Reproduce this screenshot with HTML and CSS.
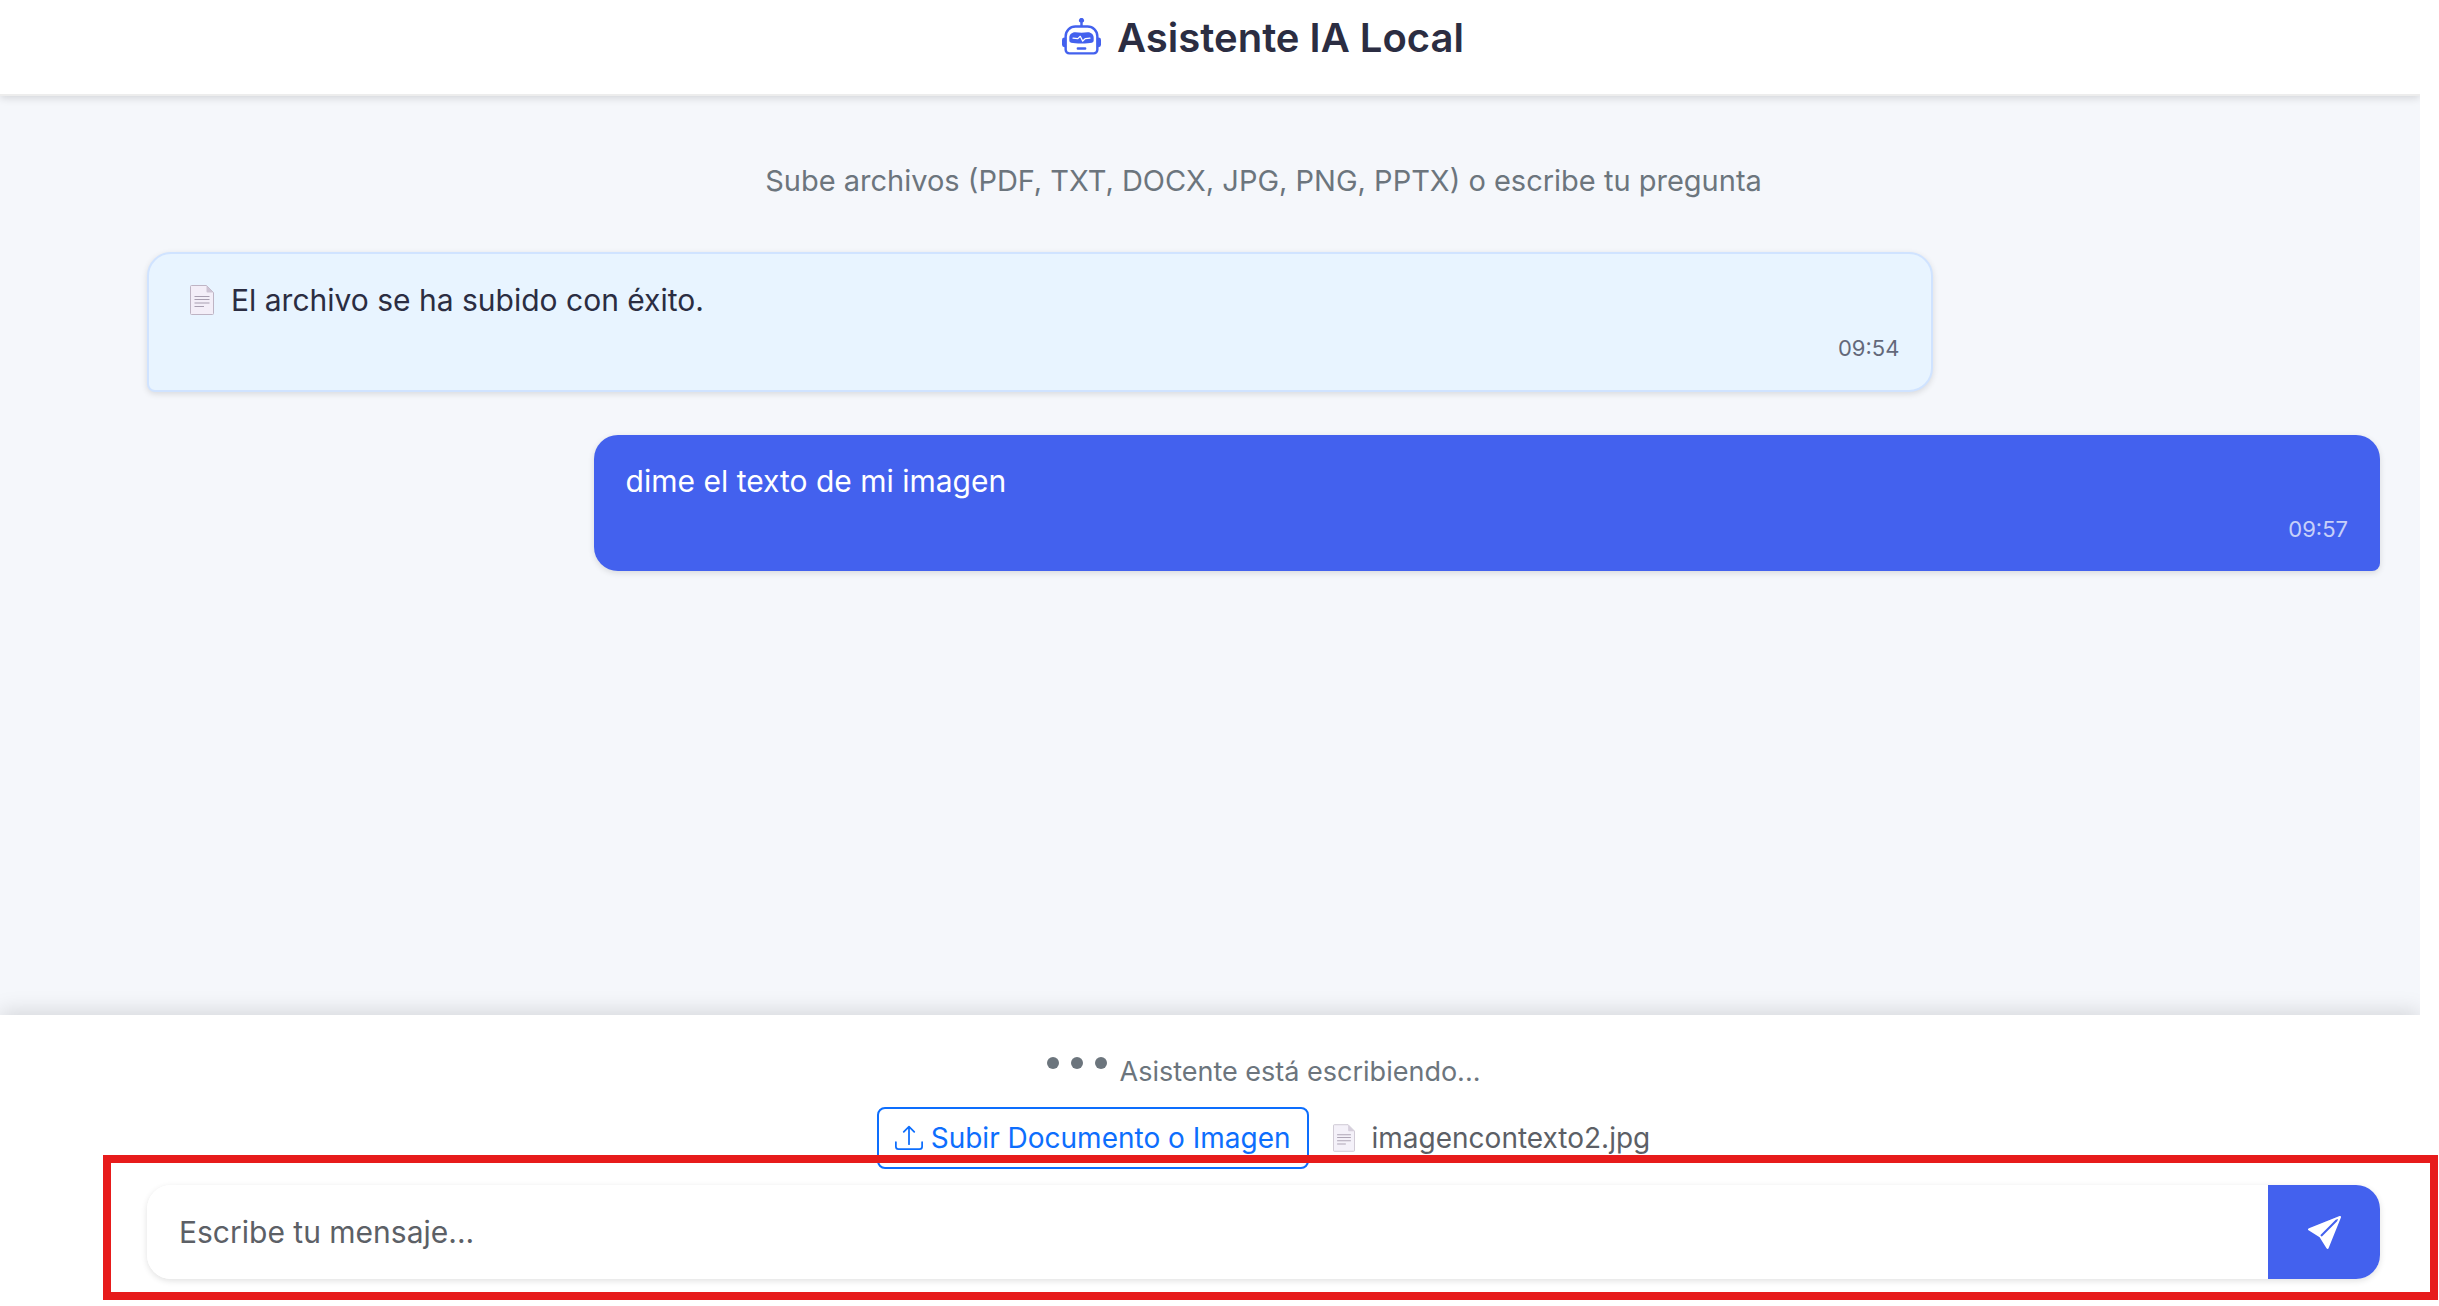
FILE: index.html
```html
<!DOCTYPE html>
<html lang="es">
<head>
<meta charset="utf-8">
<meta name="viewport" content="width=device-width, initial-scale=1">
<title>Asistente IA Local</title>
<link rel="stylesheet" href="styles.css">
</head>
<body>
<div class="app">
  <header class="app-header">
    <svg class="icon-robot" viewBox="0 0 16 16" fill="currentColor" aria-hidden="true"><path d="M6 12.5a.5.5 0 0 1 .5-.5h3a.5.5 0 0 1 0 1h-3a.5.5 0 0 1-.5-.5M3 8.062C3 6.76 4.235 5.765 5.53 5.886a26.6 26.6 0 0 0 4.94 0C11.765 5.765 13 6.76 13 8.062v1.157a.93.93 0 0 1-.765.935c-.845.147-2.34.346-4.235.346s-3.39-.2-4.235-.346A.93.93 0 0 1 3 9.219zm4.542-.827a.25.25 0 0 0-.217.068l-.92.9a25 25 0 0 1-1.871-.183.25.25 0 0 0-.068.495c.55.076 1.232.149 2.02.193a.25.25 0 0 0 .189-.071l.754-.736.847 1.71a.25.25 0 0 0 .404.062l.932-.97a25 25 0 0 0 1.922-.188.25.25 0 0 0-.068-.495c-.538.074-1.207.145-1.98.189a.25.25 0 0 0-.166.076l-.754.785-.842-1.7a.25.25 0 0 0-.182-.135"/><path d="M8.5 1.866a1 1 0 1 0-1 0V3h-2A4.5 4.5 0 0 0 1 7.5V8a1 1 0 0 0-1 1v2a1 1 0 0 0 1 1v1a2 2 0 0 0 2 2h10a2 2 0 0 0 2-2v-1a1 1 0 0 0 1-1V9a1 1 0 0 0-1-1v-.5A4.5 4.5 0 0 0 10.5 3h-2zM14 7.5V13a1 1 0 0 1-1 1H3a1 1 0 0 1-1-1V7.5A3.5 3.5 0 0 1 5.5 4h5A3.5 3.5 0 0 1 14 7.5"/></svg>
    <h1 class="title">Asistente IA Local</h1>
  </header>

  <main class="chat">
    <div class="container messages">
      <p class="hint">Sube archivos (PDF, TXT, DOCX, JPG, PNG, PPTX) o escribe tu pregunta</p>
      <article class="message message-bot">
        <p class="message-text"><svg class="icon-file" viewBox="0 0 24 30" aria-hidden="true"><path d="M1.5 .5h15l7 7v21a1 1 0 0 1-1 1h-21a1 1 0 0 1-1-1v-27a1 1 0 0 1 1-1z" fill="#f3eef8" stroke="#beb4c4"/><path d="M16.5 .5v6a1 1 0 0 0 1 1h6z" fill="#cdc3d4"/><path d="M4.500 11.500h15M4.500 14.500h15M4.500 18h15M4.500 21.500h9.500" stroke="#a79eb0" stroke-width="1.200"/></svg>El archivo se ha subido con éxito.</p>
        <time class="message-time">09:54</time>
      </article>
      <article class="message message-user">
        <p class="message-text">dime el texto de mi imagen</p>
        <time class="message-time">09:57</time>
      </article>
    </div>
  </main>

  <footer class="composer">
    <div class="container">
      <div class="typing" role="status">
        <span class="dots"><i class="dot"></i><i class="dot"></i><i class="dot"></i></span>
        <span>Asistente está escribiendo...</span>
      </div>
      <div class="upload-row">
        <button type="button" class="upload"><svg class="icon-upload" viewBox="0 0 16 16" fill="currentColor" aria-hidden="true"><path d="M.5 9.900a.5.5 0 0 1 .5.5v2.500a1 1 0 0 0 1 1h12a1 1 0 0 0 1-1v-2.500a.5.5 0 0 1 1 0v2.500a2 2 0 0 1-2 2H2a2 2 0 0 1-2-2v-2.500a.5.5 0 0 1 .5-.5"/><path d="M7.646 1.146a.5.5 0 0 1 .708 0l3 3a.5.5 0 0 1-.708.708L8.500 2.707V11.500a.5.5 0 0 1-1 0V2.707L5.354 4.854a.5.5 0 1 1-.708-.708z"/></svg>Subir Documento o Imagen</button>
        <span class="file"><svg class="icon-file" viewBox="0 0 24 30" aria-hidden="true"><path d="M1.5 .5h15l7 7v21a1 1 0 0 1-1 1h-21a1 1 0 0 1-1-1v-27a1 1 0 0 1 1-1z" fill="#f4f1f9" stroke="#cbc5d0"/><path d="M16.5 .5v6a1 1 0 0 0 1 1h6z" fill="#d6cfdc"/><path d="M4.500 11.500h15M4.500 14.500h15M4.500 18h15M4.500 21.500h9.500" stroke="#aea6b6" stroke-width="1.200"/></svg>imagencontexto2.jpg</span>
      </div>
      <form class="entry">
        <input class="entry-text" type="text" placeholder="Escribe tu mensaje..." aria-label="Escribe tu mensaje">
        <button class="send" type="button" aria-label="Enviar"><svg class="icon-send" viewBox="0 0 16 16" fill="currentColor" aria-hidden="true"><path d="M15.964.686a.5.5 0 0 0-.65-.65L.767 5.855H.766l-.452.18a.5.5 0 0 0-.082.887l.41.26.001.002 4.995 3.178 3.178 4.995.002.002.26.41a.5.5 0 0 0 .886-.083zm-1.833 1.890L6.637 10.070l-.215-.338a.5.5 0 0 0-.154-.154l-.338-.215 7.494-7.494 1.178-.471z"/></svg></button>
        <span class="highlight" aria-hidden="true"></span>
      </form>
    </div>
  </footer>
</div>
<div class="gutter"></div>
</body>
</html>
```
FILE: styles.css
```css
* {
  box-sizing: border-box;
}

body {
  display: flex;
  margin: 0;
  background: #fff;
  color: #2b2d42;
  font-family: Inter, "Liberation Sans", sans-serif;
  font-size: 30px;
  line-height: 48px;
}

h1,
p {
  margin: 0;
}

.app {
  display: flex;
  flex: 1;
  flex-direction: column;
  min-width: 0;
  min-height: 100vh;
}

/* Plain strip beside the page, kept clear of the bars' shadows */
.gutter {
  position: relative;
  z-index: 1;
  width: 19px;
  background: #fff;
}

.app-header {
  position: relative;
  display: flex;
  justify-content: center;
  align-items: flex-start;
  gap: 16px;
  padding: 14px 0 32px 106px;
  border-bottom: 2px solid #ededed;
  box-shadow: 0 2px 8px rgba(0, 0, 0, 0.14);
}

.icon-robot {
  width: 39px;
  height: 39px;
  margin-top: 4px;
  color: #4361ee;
}

.title {
  font-size: 40px;
  font-weight: 600;
  line-height: 48px;
}

.container {
  padding: 0 40px 0 147px;
}

.chat {
  flex: 1;
  background: #f5f7fb;
}

.messages {
  display: flex;
  flex-direction: column;
  padding-top: 61px;
}

.hint {
  margin-bottom: 47px;
  color: #6c757d;
  font-size: 29px;
  text-align: center;
}

.message {
  width: 80%;
  padding: 22px 32px 24px;
  border-radius: 24px;
  box-shadow: 0 2px 6px rgba(0, 0, 0, 0.12);
}

.message-bot {
  margin-bottom: 43px;
  padding-left: 41px;
  border: 2px solid #d0e3ff;
  border-bottom-left-radius: 8px;
  background: #e8f4ff;
}

.message-user {
  align-self: flex-end;
  border-bottom-right-radius: 8px;
  background: #4361ee;
  color: #fff;
}

.message-time {
  display: block;
  padding-top: 6px;
  font-size: 22px;
  line-height: 36px;
  text-align: right;
  opacity: 0.7;
}

.icon-file {
  width: 24px;
  height: 30px;
  margin-right: 17px;
  vertical-align: -4px;
}

.composer {
  position: relative;
  padding: 31px 0 27px;
  background: #fff;
  box-shadow: 0 -4px 20px rgba(0, 0, 0, 0.13);
}

.typing {
  display: flex;
  justify-content: center;
  gap: 13px;
  color: #6c757d;
  font-size: 27px;
  line-height: 52px;
}

.dots {
  display: flex;
  gap: 12px;
  padding-top: 11px;
}

.dot {
  width: 12px;
  height: 12px;
  border-radius: 50%;
  background: #6c757d;
}

.upload-row {
  display: flex;
  justify-content: center;
  align-items: center;
  gap: 24px;
  margin: 9px 0 16px;
}

.upload {
  display: flex;
  align-items: center;
  gap: 8px;
  height: 62px;
  padding: 0 16px;
  border: 2px solid #0d6efd;
  border-radius: 8px;
  background: #fff;
  color: #0d6efd;
  font: inherit;
  font-size: 28px;
}

.icon-upload {
  width: 28px;
  height: 28px;
}

.file {
  color: #5c5f66;
  font-size: 28px;
}

.file .icon-file {
  width: 22px;
  height: 28px;
}

.entry {
  position: relative;
  z-index: 2;
  display: flex;
  border-radius: 24px;
  box-shadow: 0 2px 6px rgba(0, 0, 0, 0.12);
}

.entry-text {
  flex: 1;
  min-width: 0;
  height: 94px;
  padding: 0 32px;
  border: 0;
  border-radius: 24px 0 0 24px;
  background: #fff;
  font: inherit;
}

.entry-text::placeholder {
  color: #5c6066;
  opacity: 1;
}

.send {
  display: flex;
  justify-content: center;
  align-items: center;
  width: 112px;
  padding: 0;
  border: 0;
  border-radius: 0 24px 24px 0;
  background: #4361ee;
  color: #fff;
}

.icon-send {
  width: 33px;
  height: 33px;
}

/* Outline drawn over the entry bar */
.highlight {
  position: absolute;
  inset: -30px -58px -21px -44px;
  border: 8px solid #e71b1b;
  pointer-events: none;
}
```
